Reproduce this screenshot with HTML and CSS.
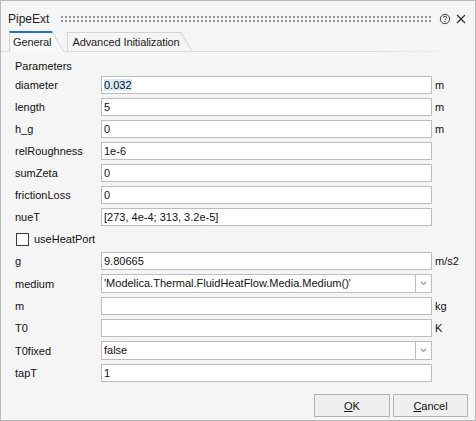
FILE: index.html
```html
<!DOCTYPE html>
<html lang="en">
<head>
  <meta charset="UTF-8">
  <title>PipeExt</title>
  <link rel="stylesheet" href="styles.css">
</head>
<body>
  <div class="dialog">

    <!-- Title bar -->
    <div class="titlebar">
      <span class="title">PipeExt</span>
      <div class="grip"></div>
      <svg class="help" width="12" height="12" viewBox="0 0 12 12">
        <circle cx="6" cy="6" r="4.7" fill="none" stroke="#3c3c3c" stroke-width="1"/>
        <path d="M4.3 4.8 Q4.4 3.2 6 3.2 Q7.7 3.2 7.7 4.6 Q7.7 5.5 6.6 6 Q6 6.3 6 7.2" fill="none" stroke="#3c3c3c" stroke-width="1"/>
        <rect x="5.5" y="8" width="1" height="1" fill="#3c3c3c"/>
      </svg>
      <svg class="close" width="10" height="10" viewBox="0 0 10 10">
        <path d="M1 1 L9 9 M9 1 L1 9" stroke="#2b2b2b" stroke-width="1.1"/>
      </svg>
    </div>

    <!-- Tabs -->
    <div class="tabs">
      <div class="tab active">General</div>
      <div class="tab">Advanced Initialization</div>
    </div>

    <!-- General page -->
    <div class="pane">
      <div class="group-title">Parameters</div>
      <div class="form">
        <label>diameter</label>
        <div class="field"><span class="selected">0.032</span></div>
        <span class="unit">m</span>

        <label>length</label>
        <div class="field">5</div>
        <span class="unit">m</span>

        <label>h_g</label>
        <div class="field">0</div>
        <span class="unit">m</span>

        <label>relRoughness</label>
        <div class="field">1e-6</div>
        <span class="unit"></span>

        <label>sumZeta</label>
        <div class="field">0</div>
        <span class="unit"></span>

        <label>frictionLoss</label>
        <div class="field">0</div>
        <span class="unit"></span>

        <label>nueT</label>
        <div class="field">[273, 4e-4; 313, 3.2e-5]</div>
        <span class="unit"></span>

        <div class="check-row">
          <span class="checkbox"></span>
          <span>useHeatPort</span>
        </div>

        <label>g</label>
        <div class="field">9.80665</div>
        <span class="unit">m/s2</span>

        <label>medium</label>
        <div class="combo">
          <div class="combo-value">'Modelica.Thermal.FluidHeatFlow.Media.Medium()'</div>
          <div class="combo-arrow">
            <svg width="7" height="5" viewBox="0 0 7 5"><path d="M1 1 L3.5 3.5 L6 1" fill="none" stroke="#9a9a9a" stroke-width="1.2"/></svg>
          </div>
        </div>
        <span class="unit"></span>

        <label>m</label>
        <div class="field"></div>
        <span class="unit">kg</span>

        <label>T0</label>
        <div class="field"></div>
        <span class="unit">K</span>

        <label>T0fixed</label>
        <div class="combo">
          <div class="combo-value">false</div>
          <div class="combo-arrow">
            <svg width="7" height="5" viewBox="0 0 7 5"><path d="M1 1 L3.5 3.5 L6 1" fill="none" stroke="#9a9a9a" stroke-width="1.2"/></svg>
          </div>
        </div>
        <span class="unit"></span>

        <label>tapT</label>
        <div class="field">1</div>
        <span class="unit"></span>
      </div>
    </div>

    <!-- OK / Cancel -->
    <div class="buttons">
      <button><u>O</u>K</button>
      <button><u>C</u>ancel</button>
    </div>
  </div>
</body>
</html>
```

FILE: styles.css
```css
body {
  margin: 0;
  padding: 0;
  font-family: "Liberation Sans", Arial, sans-serif;
  font-size: 11px;
  color: #111;
  background-color: #f5f5f5;
}

.dialog {
  width: 476px;
  height: 421px;
  box-sizing: border-box;
  border: 1px solid #b9b9b9;
  background-color: #f5f5f5;
  display: flex;
  flex-direction: column;
}

/* title bar */
.titlebar {
  height: 30px;
  box-sizing: border-box;
  padding: 5px 9px 0 7px;
  display: flex;
  align-items: center;
}

.title {
  font-size: 12px;
  color: #1e1e1e;
}

.grip {
  flex: 1;
  height: 8px;
  margin: 0 6px 0 11px;
  background-image: radial-gradient(circle, #939393 0.9px, transparent 1.1px);
  background-size: 4px 4px;
}

.help {
  margin-right: 5px;
}

/* tabs */
.tabs {
  height: 21px;
  padding-left: 8px;
  display: flex;
  align-items: flex-end;
  background: linear-gradient(to right, #dcdcdc 80%, rgba(220, 220, 220, 0)) left bottom / 98% 1px no-repeat;
}

.tab {
  position: relative;
  z-index: 0;
  height: 18px;
  line-height: 18px;
  margin-bottom: 1px;
  margin-right: 15px;
  padding: 0 1px 0 4px;
  border-left: 1px solid #d3d3d3;
  border-top: 1px solid #d3d3d3;
  background-color: #f5f5f5;
  color: #1e1e1e;
  letter-spacing: -0.1px;
}

.tab::after {
  content: "";
  position: absolute;
  z-index: -1;
  top: -1px;
  bottom: 0;
  right: 0;
  width: 14px;
  border-top: 1px solid #d3d3d3;
  border-right: 1px solid #d3d3d3;
  background-color: inherit;
  transform-origin: top left;
  transform: skewX(31deg);
}

.tab.active {
  height: 19px;
  margin-bottom: 0;
  padding-left: 3px;
  border-top: 2px solid #1f74c4;
  background-color: #f8f8f8;
}

.tab.active::after {
  top: -2px;
  border-top: 2px solid #1f74c4;
}

/* general page */
.pane {
  flex: 1;
  padding: 6px 0 0 14px;
}

.group-title {
  height: 16px;
  line-height: 16px;
  margin-bottom: 2px;
}

.form {
  display: grid;
  grid-template-columns: 83px 331px auto;
  column-gap: 3px;
  row-gap: 4px;
  align-items: center;
}

.form label {
  line-height: 18px;
}

.field {
  height: 18px;
  box-sizing: border-box;
  border: 1px solid #bdbdbd;
  background-color: #fff;
  padding-left: 2px;
  line-height: 16px;
  white-space: nowrap;
  overflow: hidden;
}

.selected {
  background-color: #d6eafb;
}

.combo {
  height: 19px;
  box-sizing: border-box;
  border: 1px solid #bdbdbd;
  background-color: #fff;
  display: flex;
}

.combo-value {
  flex: 1;
  padding-left: 2px;
  line-height: 17px;
  white-space: nowrap;
  overflow: hidden;
}

.combo-arrow {
  width: 15px;
  border-left: 1px solid #bdbdbd;
  display: flex;
  align-items: center;
  justify-content: center;
}

.check-row {
  grid-column: 1 / 4;
  height: 18px;
  display: flex;
  align-items: center;
  gap: 5px;
  padding-left: 1px;
}

.checkbox {
  width: 11px;
  height: 11px;
  border: 1px solid #3a3a3a;
  background-color: #fff;
}

/* OK / Cancel */
.buttons {
  display: flex;
  justify-content: flex-end;
  gap: 3px;
  padding: 0 7px 3px 0;
}

.buttons button {
  width: 76px;
  height: 23px;
  border: 1px solid #b3b3b3;
  background-color: #efefef;
  font-family: "Liberation Sans", Arial, sans-serif;
  font-size: 11px;
  color: #111;
  padding: 0;
}

.buttons button + button {
  width: 75px;
}
```
